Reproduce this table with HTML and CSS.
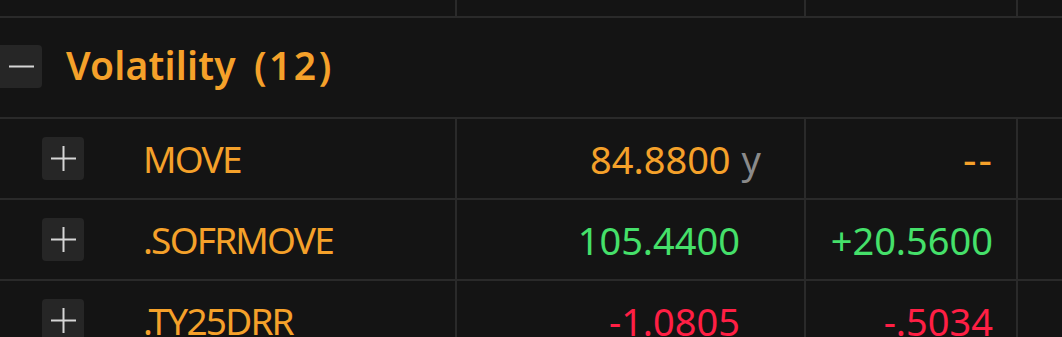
FILE: index.html
```html
<!DOCTYPE html>
<html lang="en">
<head>
<meta charset="utf-8">
<title>Watchlist</title>
<link rel="stylesheet" href="styles.css">
</head>
<body>
<div class="table">
  <div class="row row-top">
    <div class="c c1"></div><div class="c c2"></div><div class="c c3"></div><div class="c c4"></div>
  </div>

  <div class="group">
    <span class="tog tog-group" aria-label="Collapse">
      <svg width="25" height="25" viewBox="0 0 25 25"><path d="M0 12.5H25" stroke="#d6d6d6" stroke-width="2"/></svg>
    </span>
    <span class="gname"><span class="gtitle">Volatility</span><span class="gcount">(12)</span></span>
  </div>

  <div class="row">
    <div class="c c1">
      <span class="tog" aria-label="Expand">
        <svg width="25" height="25" viewBox="0 0 25 25"><path d="M0 12.5H25M12.5 0V25" stroke="#d6d6d6" stroke-width="2"/></svg>
      </span>
      <span class="tick">MOVE</span>
    </div>
    <div class="c c2 num"><span class="orange">84.8800</span><span class="unit">y</span></div>
    <div class="c c3 num orange"><span class="dash">--</span></div>
    <div class="c c4"></div>
  </div>

  <div class="row">
    <div class="c c1">
      <span class="tog" aria-label="Expand">
        <svg width="25" height="25" viewBox="0 0 25 25"><path d="M0 12.5H25M12.5 0V25" stroke="#d6d6d6" stroke-width="2"/></svg>
      </span>
      <span class="tick">.SOFRMOVE</span>
    </div>
    <div class="c c2 num green">105.4400</div>
    <div class="c c3 num green">+20.5600</div>
    <div class="c c4"></div>
  </div>

  <div class="row">
    <div class="c c1">
      <span class="tog" aria-label="Expand">
        <svg width="25" height="25" viewBox="0 0 25 25"><path d="M0 12.5H25M12.5 0V25" stroke="#d6d6d6" stroke-width="2"/></svg>
      </span>
      <span class="tick">.TY25DRR</span>
    </div>
    <div class="c c2 num red">-1.0805</div>
    <div class="c c3 num red">-.5034</div>
    <div class="c c4"></div>
  </div>
</div>
</body>
</html>
```
FILE: styles.css
```css
html, body {
  margin: 0;
  padding: 0;
  background: #141414;
  overflow: hidden;
}

.table {
  width: 1062px;
  font-family: "Noto Sans", "Open Sans", sans-serif;
  color: #f5a12a;
}

.row {
  display: flex;
  height: 81px;
  border-bottom: 2px solid #2a2a2a;
  box-sizing: border-box;
}

.row-top {
  height: 18px;
}

.c {
  box-sizing: border-box;
  border-right: 2px solid #2a2a2a;
  display: flex;
  align-items: center;
  height: 100%;
}

.c1 {
  width: 457px;
  padding-left: 42px;
}

.c2 {
  width: 349px;
  padding-right: 64px;
}

.c3 {
  width: 212px;
  padding-right: 23px;
}

.c4 {
  flex: 1;
  border-right: none;
}

.num {
  justify-content: flex-end;
  font-size: 38px;
  white-space: nowrap;
}

.group {
  display: flex;
  align-items: center;
  height: 101px;
  border-bottom: 2px solid #2a2a2a;
  box-sizing: border-box;
}

.tog {
  width: 42px;
  height: 43px;
  flex: none;
  background: #262626;
  border-radius: 4px;
  display: flex;
  align-items: center;
  justify-content: center;
}

.tog-group {
  border-radius: 0 4px 4px 0;
  margin-bottom: 2px;
}

.gname {
  display: flex;
  align-items: baseline;
  gap: 18px;
  margin-left: 24px;
  padding-bottom: 6px;
  font-size: 39px;
  font-weight: 600;
  color: #f5a12a;
  white-space: nowrap;
}

.gtitle {
  letter-spacing: 0.2px;
}

.gcount {
  letter-spacing: 2.5px;
}

.tick {
  margin-left: 59px;
  font-size: 37px;
  letter-spacing: -1.8px;
  color: #f5a12a;
  white-space: nowrap;
}

.orange { color: #f5a12a; }
.green { color: #45e06a; }
.red { color: #ff1f44; }

.dash {
  font-size: 42px;
  letter-spacing: 2px;
  margin-right: -1px;
}

.unit {
  color: #8a8a8a;
  margin-left: 11px;
  margin-right: -21px;
}
```
